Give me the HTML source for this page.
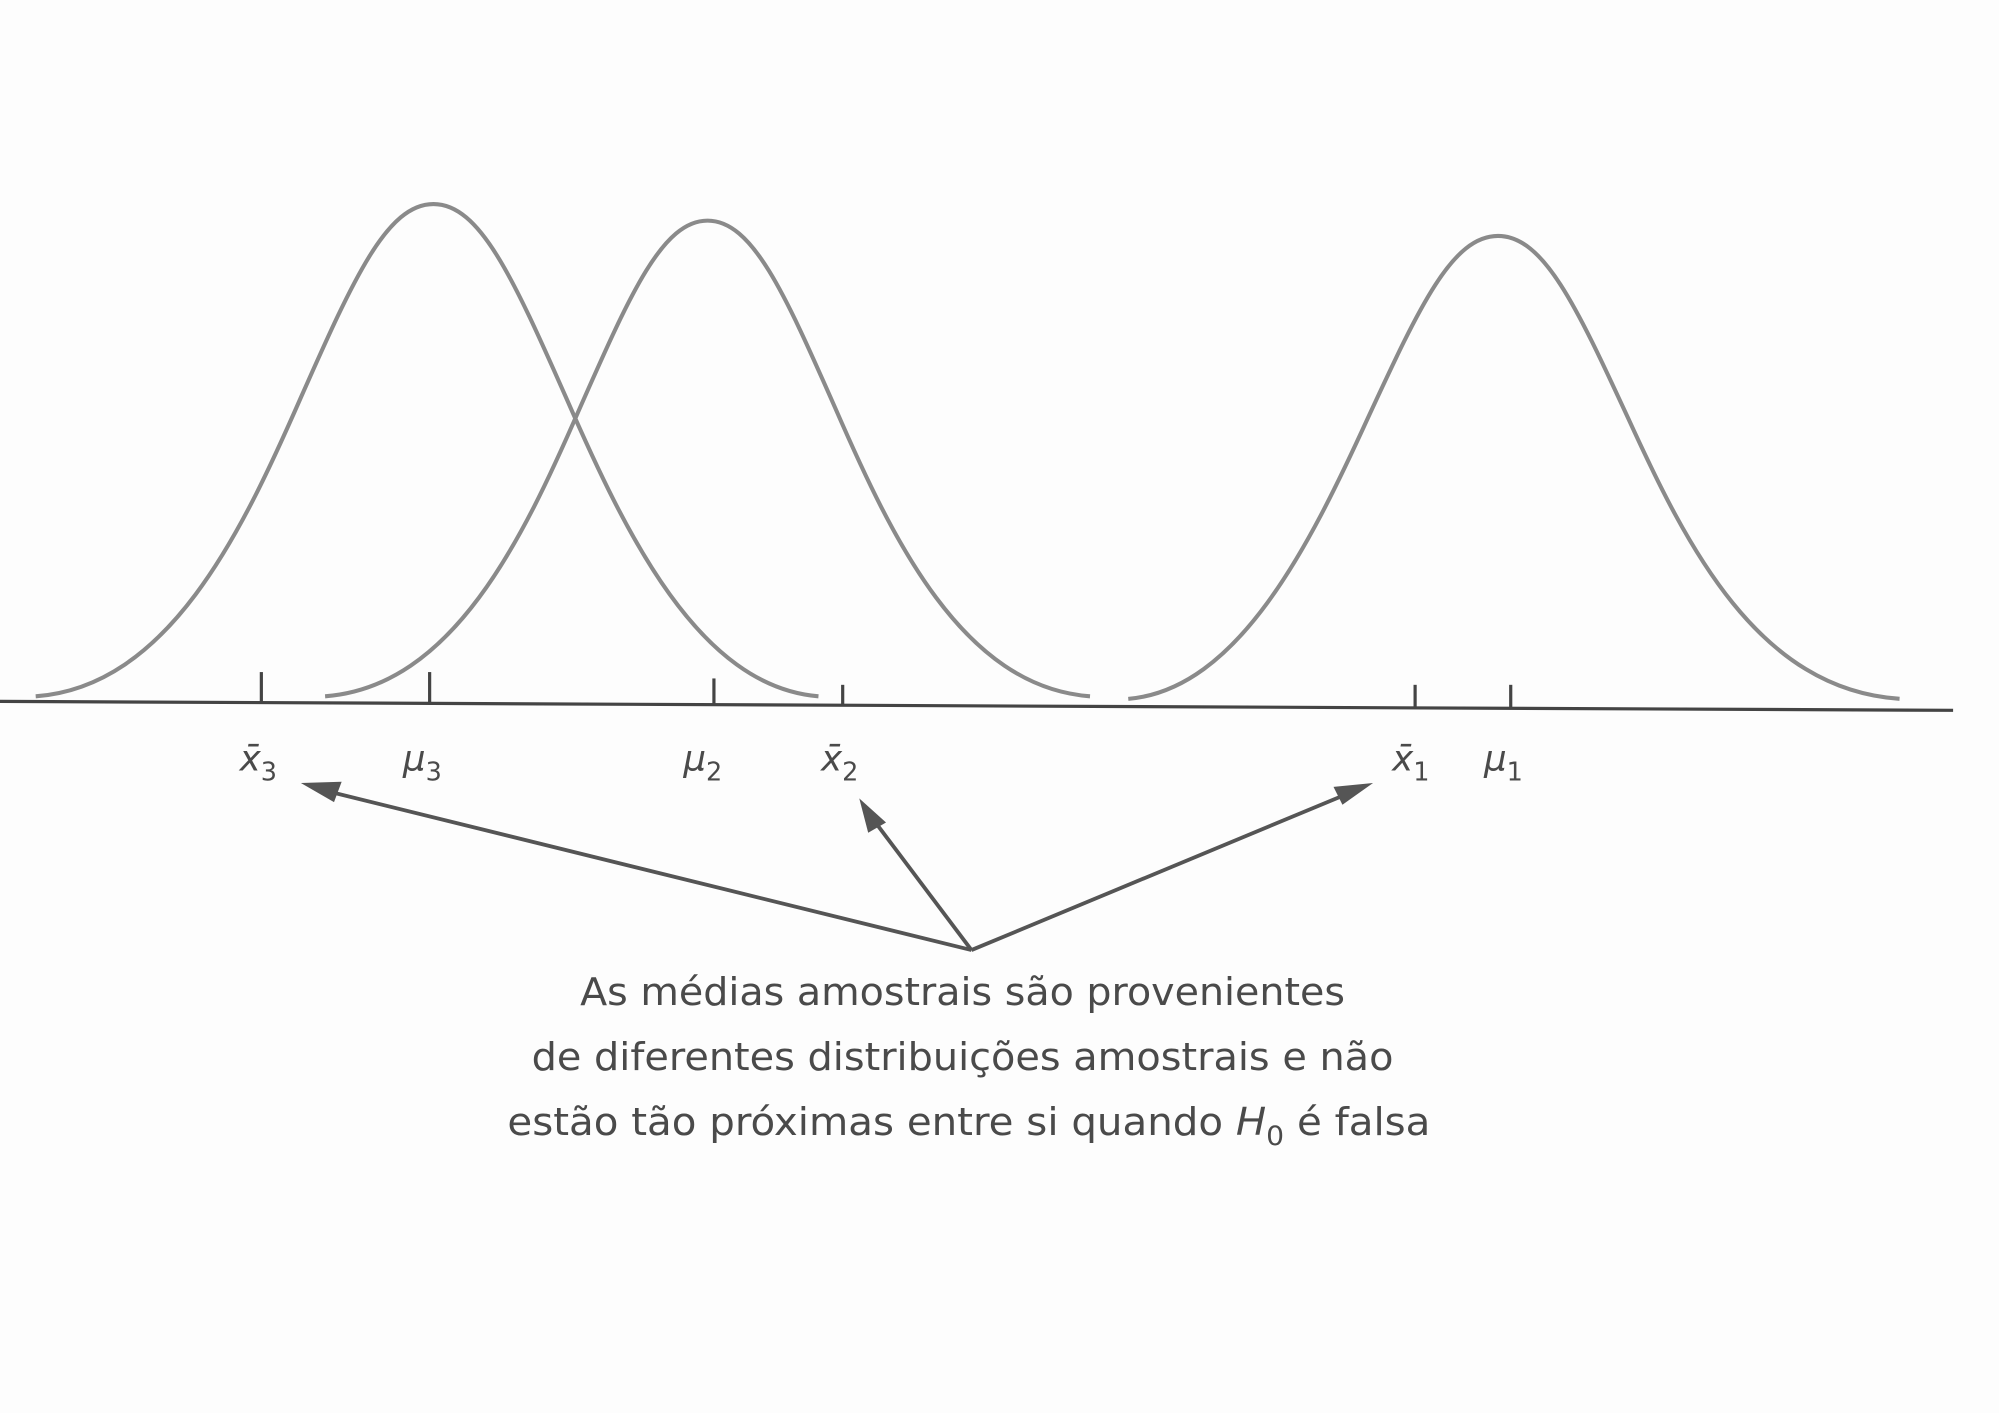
<!DOCTYPE html>
<html><head><meta charset="utf-8"><style>
html,body{margin:0;padding:0;background:#fff;}
svg{display:block;}
text{font-family:"DejaVu Sans","Liberation Sans",sans-serif;fill:#4a4a4a;}
</style></head><body>
<svg width="1999" height="1413" viewBox="0 0 1568 1108" preserveAspectRatio="none" xmlns="http://www.w3.org/2000/svg">
<rect width="1568" height="1108" fill="#fdfdfd"/>
<g fill="none" stroke="#8a8a8a" stroke-width="3.2">
<path d="M28,546 C132,538.3 189.2,418.6 236,311.7 C277.6,217.9 303.6,160 340,160 C376.4,160 402.4,217.9 444,311.7 C490.8,418.6 548,538.3 642,546"/>
<path d="M255,546 C355,538.5 410,422.9 455,319.6 C495,228.9 520,173 555,173 C590,173 615,228.9 655,319.6 C700,422.9 755,538.5 855,546"/>
<path d="M885,548 C971,540.7 1027.1,428.2 1073,327.7 C1113.8,239.5 1139.3,185 1175,185 C1210.7,185 1236.2,239.5 1277,327.7 C1322.9,428.2 1379,540.7 1490,548"/>
</g>
<g stroke="#444" stroke-width="2.5" fill="none">
<line x1="0" y1="550" x2="1532" y2="557"/>
<line x1="205" y1="527" x2="205" y2="551"/>
<line x1="337" y1="527" x2="337" y2="551"/>
<line x1="560" y1="532" x2="560" y2="553"/>
<line x1="661" y1="537" x2="661" y2="554"/>
<line x1="1110" y1="537" x2="1110" y2="556"/>
<line x1="1185" y1="537" x2="1185" y2="556"/>
</g>
<g stroke="#555" stroke-width="3" fill="none">
<line x1="762" y1="745" x2="255" y2="620"/>
<line x1="762" y1="745" x2="683" y2="640"/>
<line x1="762" y1="745" x2="1058" y2="622"/>
</g>
<g fill="#555">
<polygon points="236,614 268,613 262,629"/>
<polygon points="674,626 695,645 681,653"/>
<polygon points="1077,614 1046,617 1053,631"/>
</g>
<g font-size="28" font-style="italic">
<text x="188" y="604">x̄<tspan font-size="20" dy="8" font-style="normal">3</tspan></text>
<text x="316" y="604">μ<tspan font-size="20" dy="8" font-style="normal">3</tspan></text>
<text x="536" y="604">μ<tspan font-size="20" dy="8" font-style="normal">2</tspan></text>
<text x="644" y="604">x̄<tspan font-size="20" dy="8" font-style="normal">2</tspan></text>
<text x="1092" y="604">x̄<tspan font-size="20" dy="8" font-style="normal">1</tspan></text>
<text x="1164" y="604">μ<tspan font-size="20" dy="8" font-style="normal">1</tspan></text>
</g>
<g font-size="30" text-anchor="middle">
<text x="755" y="788" textLength="600" lengthAdjust="spacingAndGlyphs">As médias amostrais são provenientes</text>
<text x="755" y="839" textLength="676" lengthAdjust="spacingAndGlyphs">de diferentes distribuições amostrais e não</text>
<text x="760" y="890" textLength="724" lengthAdjust="spacingAndGlyphs">estão tão próximas entre si quando <tspan font-style="italic">H</tspan><tspan font-size="21" dy="8">0</tspan><tspan dy="-8"> é falsa</tspan></text>
</g>
</svg>
</body></html>
